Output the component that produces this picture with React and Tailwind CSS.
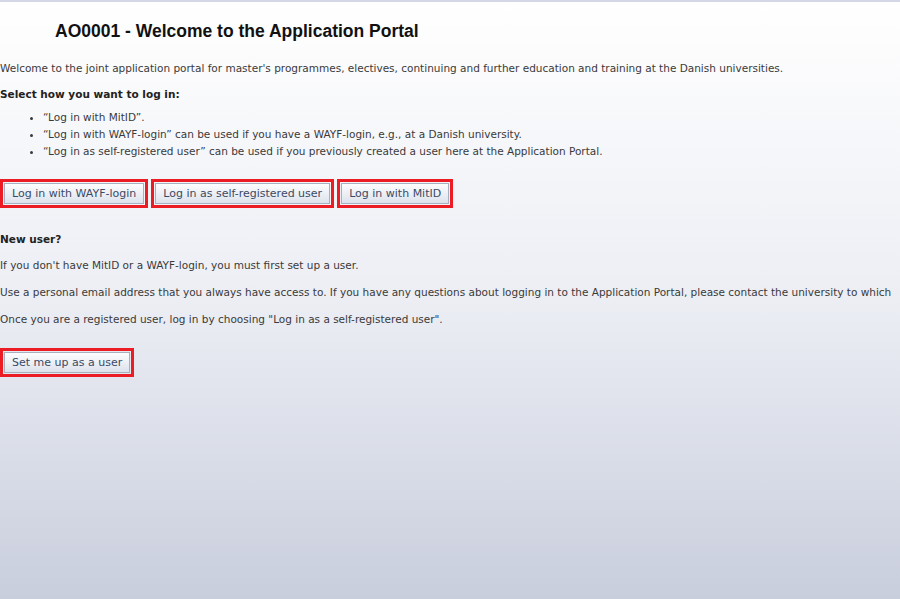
import React from 'react';

const HighlightButton = ({ label, className = '' }) => (
    <div className={`border-[3px] border-[#ec1c24] p-[1px] ${className}`}>
        <button className="h-[21px] px-[7px] border border-[#a8b0c0] bg-gradient-to-b from-[#fdfdfe] to-[#dde2ec] text-[#3a4a66] text-[11px] leading-none whitespace-nowrap">
            {label}
        </button>
    </div>
);

const App = () => {
    return (
        <div className="min-h-[599px] w-full overflow-hidden bg-gradient-to-b from-white via-[#eceef4] to-[#c9cedd] font-['DejaVu_Sans',sans-serif] text-[#3a3a3a] text-[10.5px]">
            <div className="h-[2px] bg-[#d4d8e4]" />

            <h1 className="pl-[55px] pt-[18px] font-['Liberation_Sans',Arial,sans-serif] font-bold text-[17.5px] leading-[22px] text-[#111]">
                AO0001 - Welcome to the Application Portal
            </h1>

            <p className="mt-[19px] leading-[14px] whitespace-nowrap">
                Welcome to the joint application portal for master's programmes, electives, continuing and further education and training at the Danish universities.
            </p>

            <p className="mt-[12px] leading-[14px] font-bold text-[#222]">Select how you want to log in:</p>

            <ul className="mt-[8px] pl-[43px] list-disc leading-[17px]">
                <li>“Log in with MitID”.</li>
                <li>“Log in with WAYF-login” can be used if you have a WAYF-login, e.g., at a Danish university.</li>
                <li>“Log in as self-registered user” can be used if you previously created a user here at the Application Portal.</li>
            </ul>

            <div className="mt-[19px] flex gap-[3px]">
                <HighlightButton label="Log in with WAYF-login" />
                <HighlightButton label="Log in as self-registered user" />
                <HighlightButton label="Log in with MitID" />
            </div>

            <p className="mt-[24px] leading-[14px] font-bold text-[#222]">New user?</p>
            <p className="mt-[12px] leading-[14px] whitespace-nowrap">If you don't have MitID or a WAYF-login, you must first set up a user.</p>
            <p className="mt-[13px] leading-[14px] whitespace-nowrap">Use a personal email address that you always have access to. If you have any questions about logging in to the Application Portal, please contact the university to which</p>
            <p className="mt-[13px] leading-[14px] whitespace-nowrap">Once you are a registered user, log in by choosing "Log in as a self-registered user".</p>

            <div className="mt-[22px] flex">
                <HighlightButton label="Set me up as a user" />
            </div>
        </div>
    );
};

export default App;
